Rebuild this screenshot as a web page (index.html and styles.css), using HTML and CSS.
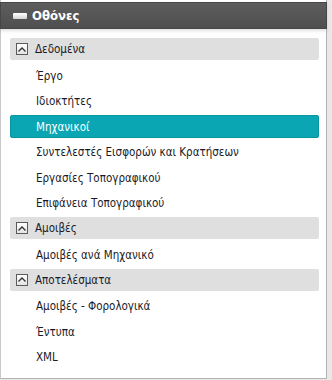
FILE: index.html
```html
<!DOCTYPE html>
<html lang="el">
<head>
    <meta charset="utf-8"/>
    <title>Οθόνες</title>
    <link rel="stylesheet" href="styles.css">
</head>
<body>
    <div class="panel">
        <div class="panel-head">
            <span class="head-icon"></span>
            <span class="head-title">Οθόνες</span>
        </div>
        <div class="panel-body">
            <div class="group">
                <div class="group-head"><span class="toggle"><svg width="8" height="5" viewBox="0 0 8 5"><path d="M0.5 4.5 L4 1 L7.5 4.5" fill="none" stroke="#333" stroke-width="1.3"/></svg></span>Δεδομένα</div>
                <div class="item">Έργο</div>
                <div class="item">Ιδιοκτήτες</div>
                <div class="item selected">Μηχανικοί</div>
                <div class="item">Συντελεστές Εισφορών και Κρατήσεων</div>
                <div class="item">Εργασίες Τοπογραφικού</div>
                <div class="item">Επιφάνεια Τοπογραφικού</div>
            </div>
            <div class="group">
                <div class="group-head"><span class="toggle"><svg width="8" height="5" viewBox="0 0 8 5"><path d="M0.5 4.5 L4 1 L7.5 4.5" fill="none" stroke="#333" stroke-width="1.3"/></svg></span>Αμοιβές</div>
                <div class="item">Αμοιβές ανά Μηχανικό</div>
            </div>
            <div class="group">
                <div class="group-head"><span class="toggle"><svg width="8" height="5" viewBox="0 0 8 5"><path d="M0.5 4.5 L4 1 L7.5 4.5" fill="none" stroke="#333" stroke-width="1.3"/></svg></span>Αποτελέσματα</div>
                <div class="item">Αμοιβές - Φορολογικά</div>
                <div class="item">Έντυπα</div>
                <div class="item">XML</div>
            </div>
        </div>
    </div>
</body>
</html>
```

FILE: styles.css
```css
body {
    margin: 0;
    background-color: #e8e8e8;
    font-family: "DejaVu Sans Condensed", "DejaVu Sans", sans-serif;
    font-size: 11.5px;
    color: #1a1a28;
}

.panel {
    width: 327px;
    height: 379px;
    background-color: #fff;
    border-right: 1px solid #b4b4b4;
    border-bottom: 1px solid #b4b4b4;
    border-left: 1px solid #c8c8c8;
    box-sizing: border-box;
    padding-top: 2px;
}

.panel-head {
    display: flex;
    align-items: center;
    height: 27px;
    margin-left: -1px;
    margin-right: -1px;
    background: linear-gradient(to bottom, #5d5d5d, #4f4f4f);
    border: 1px solid #474747;
    box-sizing: border-box;
    box-shadow: 0 2px 3px rgba(0, 0, 0, 0.12);
}

.head-icon {
    width: 14px;
    height: 6px;
    margin-left: 12px;
    margin-right: 5px;
    border-radius: 1px;
    background: linear-gradient(to bottom, #ffffff, #d4d4d4);
}

.head-title {
    color: #fff;
    font-weight: bold;
    font-size: 13px;
}

.panel-body {
    padding: 9px 7px 0 9px;
}

.group + .group {
    margin-top: 2.5px;
}

.group-head {
    display: flex;
    align-items: center;
    height: 22px;
    margin-bottom: 4px;
    background-color: #dfdfdf;
    border-radius: 2px;
}

.toggle {
    display: flex;
    align-items: center;
    justify-content: center;
    width: 10px;
    height: 10px;
    margin-left: 6px;
    margin-right: 7px;
    border: 1px solid #5a5a5a;
    background: linear-gradient(to bottom, #ffffff, #e4e4e4);
}

.item {
    display: flex;
    align-items: center;
    height: 23px;
    margin-top: 2.5px;
    padding-left: 25px;
    border: 1px solid transparent;
    box-sizing: border-box;
}

.item.selected {
    background-color: #0aa6b4;
    border-color: #07959f;
    border-radius: 2px;
    color: #fff;
}
```
